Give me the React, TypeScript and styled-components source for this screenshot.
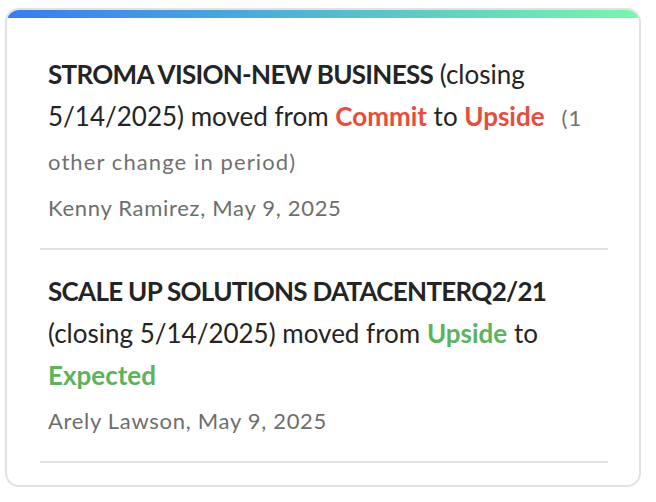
import React from "react";
import styled, { createGlobalStyle } from "styled-components";

const Global = createGlobalStyle`
  html, body { margin: 0; padding: 0; background: #ffffff; }
  body { font-family: Lato, "Noto Sans", sans-serif; }
`;

const Card = styled.div`
  box-sizing: border-box;
  margin: 8px 0 0 5px;
  width: 636px;
  height: 479px;
  border: 2px solid #e2e2e2;
  border-radius: 14px;
  overflow: hidden;
  background: #fff;
  display: flex;
  flex-direction: column;
`;

const GradientBar = styled.div`
  height: 8px;
  flex: none;
  background: linear-gradient(90deg, #3a7bf3 0%, #4fb3d3 45%, #78f7ab 100%);
`;

const List = styled.div`
  padding: 15px 31px 0 33px;
  display: flex;
  flex-direction: column;
`;

const Item = styled.div`
  padding: 20px 8px 25px;
  border-bottom: 2px solid #e0e0e0;
`;

const Message = styled.div`
  font-size: 26px;
  line-height: 42px;
  color: #242424;
`;

const Deal = styled.span`
  font-weight: 700;
  letter-spacing: -0.7px;
`;

const Stage = styled.span<{ $tone: "red" | "green" }>`
  font-weight: 700;
  color: ${(p) => (p.$tone === "red" ? "#e74c3c" : "#5cb35c")};
`;

const Extra = styled.span`
  font-size: 22px;
  color: #717171;
  letter-spacing: 1.1px;
  margin-left: 17px;
`;

const Meta = styled.div`
  margin-top: 10px;
  font-size: 22px;
  line-height: 30px;
  color: #6e6e6e;
  letter-spacing: 0.7px;
`;

type Change = {
  deal: string;
  closing: string;
  from: string;
  to: string;
  tone: "red" | "green";
  extra?: string;
  author: string;
  date: string;
};

const changes: Change[] = [
  {
    deal: "STROMA VISION-NEW BUSINESS",
    closing: "5/14/2025",
    from: "Commit",
    to: "Upside",
    tone: "red",
    extra: "(1 other change in period)",
    author: "Kenny Ramirez",
    date: "May 9, 2025",
  },
  {
    deal: "SCALE UP SOLUTIONS DATACENTERQ2/21",
    closing: "5/14/2025",
    from: "Upside",
    to: "Expected",
    tone: "green",
    author: "Arely Lawson",
    date: "May 9, 2025",
  },
];

export default function App() {
  return (
    <>
      <Global />
      <Card>
        <GradientBar />
        <List>
          {changes.map((c) => (
            <Item key={c.deal}>
              <Message>
                <Deal>{c.deal}</Deal> (closing {c.closing}) moved from{" "}
                <Stage $tone={c.tone}>{c.from}</Stage> to{" "}
                <Stage $tone={c.tone}>{c.to}</Stage>
                {c.extra && <Extra>{c.extra}</Extra>}
              </Message>
              <Meta>
                {c.author}, {c.date}
              </Meta>
            </Item>
          ))}
        </List>
      </Card>
    </>
  );
}
